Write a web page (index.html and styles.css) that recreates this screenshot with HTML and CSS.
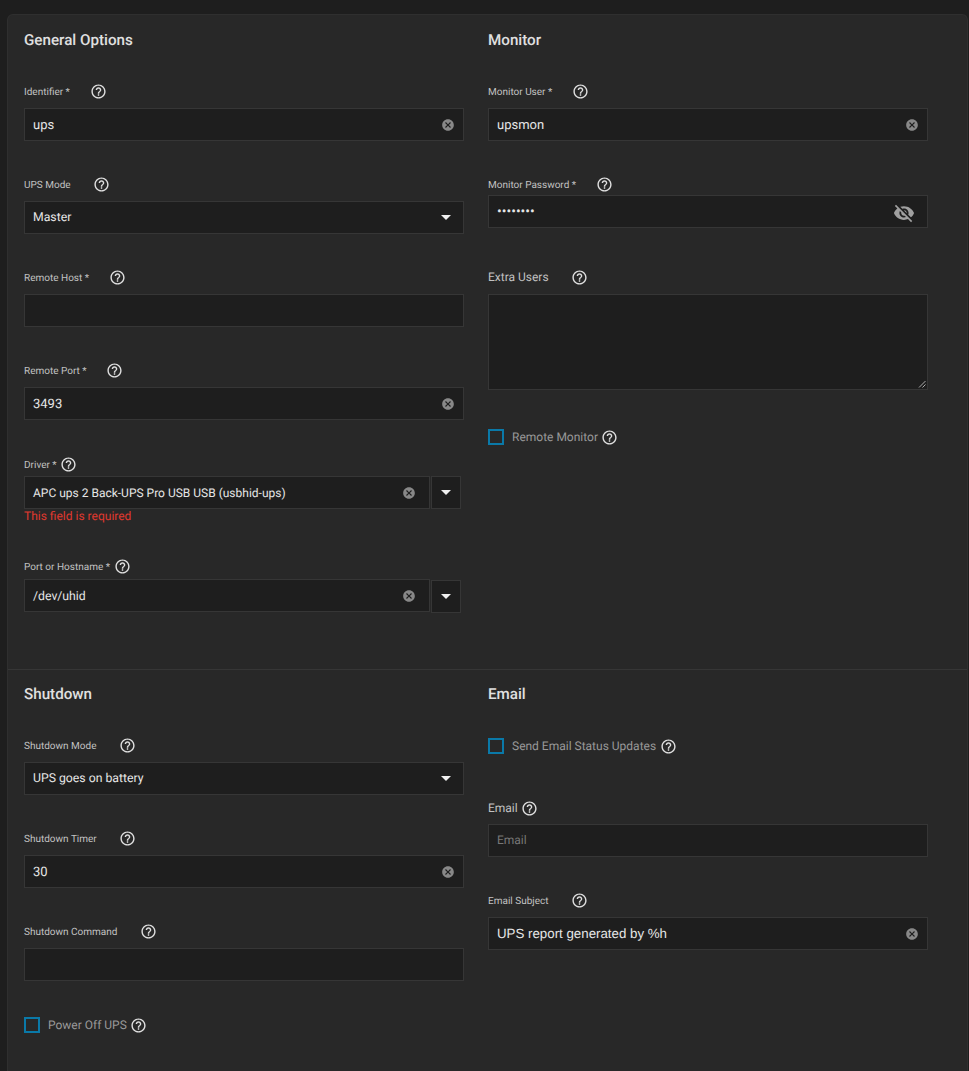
FILE: index.html
```html
<!DOCTYPE html>
<html lang="en">
<head>
<meta charset="utf-8">
<title>UPS Service</title>
<link rel="stylesheet" href="styles.css">
</head>
<body>
<svg class="defs" width="0" height="0" aria-hidden="true">
  <defs>
    <symbol id="help" viewBox="0 0 24 24"><path fill="currentColor" d="M11 18h2v-2h-2v2zm1-16C6.48 2 2 6.48 2 12s4.48 10 10 10 10-4.48 10-10S17.52 2 12 2zm0 18c-4.41 0-8-3.59-8-8s3.59-8 8-8 8 3.59 8 8-3.59 8-8 8zm0-14c-2.21 0-4 1.79-4 4h2c0-1.1.9-2 2-2s2 .9 2 2c0 2-3 1.75-3 5h2c0-2.25 3-2.5 3-5 0-2.21-1.79-4-4-4z"/></symbol>
    <symbol id="clear" viewBox="0 0 24 24"><path fill="currentColor" d="M12 2C6.47 2 2 6.47 2 12s4.47 10 10 10 10-4.47 10-10S17.53 2 12 2zm5 13.59L15.59 17 12 13.41 8.41 17 7 15.59 10.59 12 7 8.41 8.41 7 12 10.59 15.59 7 17 8.41 13.41 12 17 15.59z"/></symbol>
    <symbol id="eye-off" viewBox="0 0 24 24"><path fill="currentColor" d="M12 7c2.76 0 5 2.24 5 5 0 .65-.13 1.26-.36 1.83l2.92 2.92c1.51-1.26 2.7-2.89 3.43-4.75-1.73-4.39-6-7.5-11-7.5-1.4 0-2.74.25-3.98.7l2.16 2.16C10.74 7.13 11.35 7 12 7zM2 4.27l2.28 2.28.46.46C3.08 8.3 1.78 10.02 1 12c1.73 4.39 6 7.5 11 7.5 1.55 0 3.03-.3 4.38-.84l.42.42L19.73 22 21 20.73 3.27 3 2 4.27zM7.53 9.8l1.55 1.55c-.05.21-.08.43-.08.65 0 1.66 1.34 3 3 3 .22 0 .44-.03.65-.08l1.55 1.55c-.67.33-1.41.53-2.2.53-2.76 0-5-2.24-5-5 0-.79.2-1.53.53-2.2zm4.31-.78l3.15 3.15.02-.16c0-1.66-1.34-3-3-3l-.17.01z"/></symbol>
  </defs>
</svg>
<main class="card">
  <section class="section section-first">
    <div class="column">
      <h3 class="heading">General Options</h3>
      <div class="field">
        <div class="label-row"><span class="label w-66">Identifier *</span><svg class="help"><use href="#help"/></svg></div>
        <div class="input"><span class="value">ups</span><svg class="clear"><use href="#clear"/></svg></div>
      </div>
      <div class="field">
        <div class="label-row"><span class="label w-69">UPS Mode</span><svg class="help"><use href="#help"/></svg></div>
        <div class="input"><span class="value value-select value-raised">Master</span><span class="caret"></span></div>
      </div>
      <div class="field">
        <div class="label-row"><span class="label w-85">Remote Host *</span><svg class="help"><use href="#help"/></svg></div>
        <div class="input"></div>
      </div>
      <div class="field">
        <div class="label-row"><span class="label w-82">Remote Port *</span><svg class="help"><use href="#help"/></svg></div>
        <div class="input"><span class="value">3493</span><svg class="clear"><use href="#clear"/></svg></div>
      </div>
      <div class="field field-combo field-driver">
        <div class="label-row"><span class="label">Driver *</span><svg class="help"><use href="#help"/></svg></div>
        <div class="combo">
          <div class="input"><span class="value value-driver">APC ups 2 Back-UPS Pro USB USB (usbhid-ups)</span><svg class="clear"><use href="#clear"/></svg></div>
          <div class="combo-btn"><span class="caret"></span></div>
        </div>
        <div class="error">This field is required</div>
      </div>
      <div class="field field-combo field-port">
        <div class="label-row"><span class="label">Port or Hostname *</span><svg class="help"><use href="#help"/></svg></div>
        <div class="combo">
          <div class="input"><span class="value value-select">/dev/uhid</span><svg class="clear"><use href="#clear"/></svg></div>
          <div class="combo-btn combo-btn-low"><span class="caret"></span></div>
        </div>
      </div>
    </div>
    <div class="column">
      <h3 class="heading">Monitor</h3>
      <div class="field">
        <div class="label-row"><span class="label w-84">Monitor User *</span><svg class="help"><use href="#help"/></svg></div>
        <div class="input"><span class="value">upsmon</span><svg class="clear"><use href="#clear"/></svg></div>
      </div>
      <div class="field field-password">
        <div class="label-row"><span class="label w-108">Monitor Password *</span><svg class="help"><use href="#help"/></svg></div>
        <div class="input"><span class="value value-dots">••••••••</span><svg class="eye"><use href="#eye-off"/></svg></div>
      </div>
      <div class="field field-extra">
        <div class="label-row"><span class="label label-big w-83">Extra Users</span><svg class="help"><use href="#help"/></svg></div>
        <div class="input textarea">
          <svg class="grip" viewBox="0 0 8 8"><path d="M1 7.5 7.5 1M4.5 7.5l3-3" stroke="#aaa" stroke-width="1" fill="none"/></svg>
        </div>
      </div>
      <div class="check check-remote">
        <span class="box"></span><span class="check-label">Remote Monitor</span><svg class="help"><use href="#help"/></svg>
      </div>
    </div>
  </section>
  <section class="section section-second">
    <div class="column">
      <h3 class="heading">Shutdown</h3>
      <div class="field">
        <div class="label-row"><span class="label w-95">Shutdown Mode</span><svg class="help"><use href="#help"/></svg></div>
        <div class="input"><span class="value value-select value-raised">UPS goes on battery</span><span class="caret"></span></div>
      </div>
      <div class="field">
        <div class="label-row"><span class="label w-95">Shutdown Timer</span><svg class="help"><use href="#help"/></svg></div>
        <div class="input"><span class="value">30</span><svg class="clear"><use href="#clear"/></svg></div>
      </div>
      <div class="field">
        <div class="label-row"><span class="label w-116">Shutdown Command</span><svg class="help"><use href="#help"/></svg></div>
        <div class="input"></div>
      </div>
      <div class="check">
        <span class="box"></span><span class="check-label">Power Off UPS</span><svg class="help"><use href="#help"/></svg>
      </div>
    </div>
    <div class="column">
      <h3 class="heading">Email</h3>
      <div class="check check-email">
        <span class="box"></span><span class="check-label">Send Email Status Updates</span><svg class="help"><use href="#help"/></svg>
      </div>
      <div class="field field-email">
        <div class="label-row"><span class="label label-big">Email</span><svg class="help"><use href="#help"/></svg></div>
        <div class="input"><span class="placeholder">Email</span></div>
      </div>
      <div class="field">
        <div class="label-row"><span class="label w-83">Email Subject</span><svg class="help"><use href="#help"/></svg></div>
        <div class="input"><span class="value value-arial">UPS report generated by %h</span><svg class="clear"><use href="#clear"/></svg></div>
      </div>
    </div>
  </section>
</main>
</body>
</html>
```
FILE: styles.css
```css
* { box-sizing: border-box; }
html, body { height: 100%; }
body {
  margin: 0;
  height: 1071px;
  overflow: hidden;
  background: #1e1e1e;
  font-family: Roboto, "Liberation Sans", sans-serif;
  color: #e6e6e6;
  padding: 14px 1px 0 7px;
  text-rendering: geometricPrecision;
}
.defs { position: absolute; }
.card {
  background: #282828;
  border: 1px solid #2f2f2f;
  border-bottom: 0;
  border-radius: 6px 6px 0 0;
  height: 1100px;
}
.section { display: grid; grid-template-columns: 440px 440px; column-gap: 24px; padding: 0 0 0 16px; }
.section-first { padding-top: 15px; height: 655px; border-bottom: 1px solid #363636; }
.section-second { padding-top: 14px; }
.heading {
  margin: 0 0 32px;
  height: 20px;
  font-size: 15.2px;
  line-height: 20px;
  font-weight: 500;
  color: #e0e0e0;
}
.field { margin-bottom: 34px; }
.label-row { display: flex; align-items: center; height: 18px; margin-bottom: 8px; }
.label { font-size: 10px; color: #c2c2c2; padding: 2px 3.5px 0 0; white-space: nowrap; }
.label-big { font-size: 12px; padding-top: 0; }
.w-66 { min-width: 65.5px; }
.w-69 { min-width: 68.5px; }
.w-82 { min-width: 82px; }
.w-83 { min-width: 83px; }
.w-84 { min-width: 83.5px; }
.w-85 { min-width: 84.5px; }
.w-95 { min-width: 94.5px; }
.w-108 { min-width: 107.5px; }
.w-116 { min-width: 115.5px; }
.help { width: 17px; height: 17px; margin-top: 1px; color: #e0e0e0; flex: none; }
.input {
  position: relative;
  display: flex;
  align-items: center;
  justify-content: space-between;
  height: 33px;
  padding: 0 8px;
  background: #1e1e1e;
  border: 1px solid #363636;
  font-size: 13px;
  color: #e6e6e6;
}
.value { white-space: nowrap; padding-top: 2px; }
.value-select { font-size: 12.25px; padding-top: 0; }
.value-raised { padding-bottom: 1px; }
.value-driver { font-size: 12px; padding-top: 0; }
.value-dots { font-size: 14px; padding-top: 0; }
.value-arial { font-family: "Liberation Sans", sans-serif; font-size: 13.3px; padding-top: 0; }
.placeholder { color: #777; font-size: 12px; padding-bottom: 2px; }
.clear { width: 14px; height: 14px; color: #888; flex: none; }
.combo .clear { margin-right: 5px; }
.eye { width: 22px; height: 22px; margin: 2px 4px 0 0; color: #a0a0a0; flex: none; }
.caret {
  width: 0; height: 0;
  border-left: 5px solid transparent;
  border-right: 5px solid transparent;
  border-top: 5px solid #f0f0f0;
  margin-right: 4px;
}
.combo { display: flex; align-items: flex-start; gap: 1px; }
.combo .input { width: 406px; flex: none; }
.combo-btn {
  width: 30px;
  height: 33px;
  background: #1e1e1e;
  border: 1px solid #363636;
  display: flex;
  align-items: center;
  justify-content: center;
}
.combo-btn .caret { margin-right: 0; }
.combo-btn-low { margin-top: 1px; }
.field-driver { margin-top: 35px; }
.field-driver .label-row { margin-bottom: 3px; }
.error { font-size: 12px; line-height: 15px; color: #e0392f; }
.field-port { margin-top: -1px; }
.field-port .label-row { margin-bottom: 4px; }
.field-password .label-row { margin-bottom: 2px; }
.field-password { margin-bottom: 40px; }
.field-extra .textarea { height: 96px; }
.field-extra { margin-bottom: 0; }
.field-email .label-row { margin-bottom: 7px; }
.grip { position: absolute; right: 1px; bottom: 1px; width: 8px; height: 8px; }
.check { display: flex; align-items: center; height: 16px; margin-top: 36px; }
.check-remote { margin-top: 39px; }
.check-email { margin-top: 34px; margin-bottom: 45px; }
.box { width: 16px; height: 16px; border: 2px solid #0a79a8; flex: none; margin-right: 8px; }
.check-label { font-size: 12px; color: #999; margin-right: 3.5px; white-space: nowrap; }
```
